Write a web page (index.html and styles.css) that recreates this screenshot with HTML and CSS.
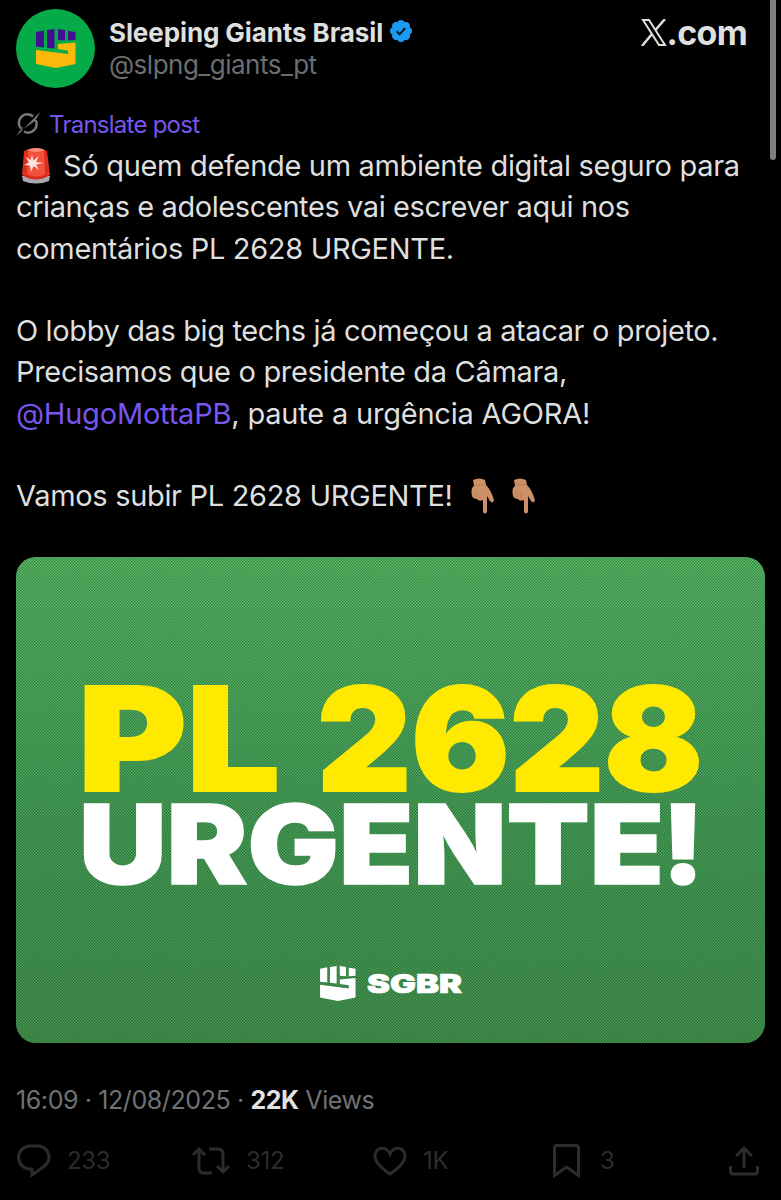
FILE: index.html
```
<!DOCTYPE html>
<html lang="pt-BR">
<head>
    <meta charset="UTF-8">
    <meta name="viewport" content="width=device-width, initial-scale=1.0">
    <title>Sleeping Giants Brasil</title>
    <link rel="stylesheet" href="styles.css">
</head>
<body>
    <div class="scrollbar"></div>
    <svg class="defs" width="0" height="0">
        <symbol id="fist-fingers" viewBox="0 0 40 39">
            <path d="M0 3L8 1.500V18.500L0 17.500ZM11 1L18.500 0V19.500L11 18.700ZM22 0L29 1V11.500L22 11ZM32 2L39.500 3V11L32 11.300Z"/>
        </symbol>
        <symbol id="fist-palm" viewBox="0 0 40 39">
            <path d="M22 15L39.500 13.500V35L20 39L0 35V21L32 25V21.500L22 20Z"/>
        </symbol>
    </svg>

    <div class="post">
        <div class="header">
            <div class="avatar">
                <svg width="40" height="39"><use href="#fist-fingers" fill="#40108f"/><use href="#fist-palm" fill="#fdb80c"/></svg>
            </div>
            <div class="author">
                <div class="name">
                    <span class="name-text">Sleeping Giants Brasil</span>
                    <svg class="badge" viewBox="0 0 22 22"><path fill="#1d9bf0" d="M20.396 11c-.018-.646-.215-1.275-.57-1.816-.354-.54-.852-.972-1.438-1.246.223-.607.27-1.264.14-1.897-.131-.634-.437-1.218-.882-1.687-.47-.445-1.053-.75-1.687-.882-.633-.13-1.290-.083-1.897.14-.273-.587-.704-1.086-1.245-1.440S11.647 1.620 11 1.604c-.646.017-1.273.213-1.813.568s-.969.854-1.240 1.440c-.608-.223-1.267-.272-1.902-.14-.635.130-1.220.436-1.690.882-.445.470-.749 1.055-.878 1.688-.130.633-.080 1.290.144 1.896-.587.274-1.087.705-1.443 1.245-.356.540-.555 1.170-.574 1.817.020.647.218 1.276.574 1.817.356.540.856.972 1.443 1.245-.224.606-.274 1.263-.144 1.896.130.634.433 1.218.877 1.688.470.443 1.054.747 1.687.878.633.132 1.290.084 1.897-.136.274.586.705 1.084 1.246 1.439.540.354 1.170.551 1.816.569.647-.016 1.276-.213 1.817-.567s.972-.854 1.245-1.440c.604.239 1.266.296 1.903.164.636-.132 1.220-.447 1.680-.907.460-.460.776-1.044.908-1.681s.075-1.299-.165-1.903c.586-.274 1.084-.705 1.439-1.246.354-.540.551-1.170.569-1.816z"/><path d="M7.300 11.200L9.900 13.700L14.600 8.500" fill="none" stroke="#071c2c" stroke-width="1.700"/></svg>
                </div>
                <div class="handle">@slpng_giants_pt</div>
            </div>
            <div class="brand">
                <svg width="26" height="27" viewBox="0 0 26 27"><g fill="none" stroke="#dcdddd"><path d="M2 1H8L24 26H18Z" stroke-width="2"/><path d="M24 0L14 11.500M11 15L1 27" stroke-width="2.500"/></g></svg>
                <span class="brand-text">.com</span>
            </div>
        </div>

        <div class="translate">
            <svg width="24" height="24" viewBox="0 0 24 24"><path d="M17 4.500A8.500 8.500 0 0 0 5 16.500M19.500 8A8.500 8.500 0 0 1 8 19.500" fill="none" stroke="#76797c" stroke-width="2.500"/><path d="M24 0L8 16.500L17 10.500Q21 7 24 0ZM0 24L7 14.500L6 19Z" fill="#76797c"/></svg>
            <span class="translate-text">Translate post</span>
        </div>

        <div class="content">
            <p>
                <span class="line l1"><svg class="siren" width="28" height="37" viewBox="0 0 28 37"><path d="M0 29L28 29L27 34Q14 39 1 34Z" fill="#a9a9ad"/><path d="M2 4Q14-2 25 4L28 28Q14 37 0 28Z" fill="#dc2e20"/><path d="M6 4Q14 0 22 4L23 27Q14 32 5 27Z" fill="#f4513a"/><path d="M5 3Q14-1 23 3Q14 7 5 3Z" fill="#ff8d78"/><path d="M10 8L11.500 13.500L17 9L14 15L22 16L14 17.500L17 23L11.500 19L9 25L8 18.500L2 18L7 15.500L3.500 10L8.500 13Z" fill="#ffe3dd"/></svg><span>Só quem defende um ambiente digital seguro para</span></span>
                <span class="line l2">crianças e adolescentes vai escrever aqui nos</span>
                <span class="line l3">comentários PL 2628 URGENTE.</span>
            </p>
            <p>
                <span class="line l4">O lobby das big techs já começou a atacar o projeto.</span>
                <span class="line l5">Precisamos que o presidente da Câmara,</span>
                <span class="line l6"><a href="#">@HugoMottaPB</a>, paute a urgência AGORA!</span>
            </p>
            <p>
                <span class="line l7"><span>Vamos subir PL 2628 URGENTE!</span><svg class="hand" width="23" height="36"><use href="#hand"/></svg><svg class="hand" width="23" height="36"><use href="#hand"/></svg></span>
            </p>
            <svg class="defs" width="0" height="0">
                <symbol id="hand" viewBox="0 0 23 36"><path d="M2 2Q8-1 14 2L15 7Q20 12 23 22Q22 26 19 23L16 18V34Q14 37 12 34V22Q8 24 6 21Q2 21 1 18Q0 14 1 10L3 8Z" fill="#cd9168"/><path d="M5 14V20M9 15V22M4 7Q9 8 14 6" fill="none" stroke="#b57a54" stroke-width=".8"/></symbol>
            </svg>
        </div>

        <div class="media">
            <svg width="749" height="486" viewBox="16 557 749 486">
                <defs>
                    <pattern id="halftone" width="17" height="17" patternUnits="userSpaceOnUse" patternTransform="scale(.1676)">
                        <path d="M0 0H9V9H0ZM8.500 8.500H17V17H8.500Z" fill="#02301a"/>
                    </pattern>
                </defs>
                <rect x="16" y="557" width="749" height="486" fill="url(#halftone)" opacity=".65"/>
                <text class="big" x="78" y="791" textLength="202" lengthAdjust="spacingAndGlyphs">PL</text>
                <text class="big" x="317" y="791" textLength="386" lengthAdjust="spacingAndGlyphs">2628</text>
                <text class="urgent" x="79" y="884" textLength="585" lengthAdjust="spacingAndGlyphs">URGENTE</text>
                <text class="urgent" x="662" y="884" textLength="42" lengthAdjust="spacingAndGlyphs">!</text>
                <g fill="#fff"><use href="#fist-fingers" x="320" y="966" width="36" height="35"/><use href="#fist-palm" x="320" y="966" width="36" height="35"/></g>
                <text class="sgbr" x="367" y="993" textLength="95" lengthAdjust="spacingAndGlyphs">SGBR</text>
            </svg>
        </div>

        <div class="meta">16:09 · 12/08/2025 · <b>22K</b> Views</div>

        <div class="actions">
            <div class="action reply">
                <svg width="34" height="34" viewBox="0 0 34 34"><path d="M13 2H21A11 11 0 0 1 32 13C32 20 28 22 15 31V25H13A11.500 11.500 0 0 1 13 2Z"/></svg>
                <span>233</span>
            </div>
            <div class="action repost">
                <svg width="38" height="30" viewBox="0 0 38 30"><path d="M1 9L7 3L13 9M7 3V22Q7 27 12 27H20M17 3H26Q31 3 31 8V26M25 20L31 26L37 20"/></svg>
                <span>312</span>
            </div>
            <div class="action like">
                <svg width="34" height="30" viewBox="0 0 34 30"><path d="M17 28C8 22 2 16 2 10C2 1 13-1 17 8C21-1 32 1 32 10C32 16 26 22 17 28Z"/></svg>
                <span>1K</span>
            </div>
            <div class="action save">
                <svg width="27" height="34" viewBox="0 0 27 34"><path d="M1.500 31.500V4Q1.500 1.500 4 1.500H23Q25.500 1.500 25.500 4V31.500L13.500 23Z"/></svg>
                <span>3</span>
            </div>
            <div class="action share">
                <svg width="30" height="30" viewBox="0 0 30 30"><path d="M15 22V3M7 10L15 2L23 10M1.500 20V25Q1.500 28 4.500 28H25.500Q28.500 28 28.500 25V20"/></svg>
            </div>
        </div>
    </div>
</body>
</html>
```
FILE: styles.css
```
body {
    margin: 0;
    background-color: #000;
    color: #dedfdf;
    font-family: Inter, "Liberation Sans", sans-serif;
    height: 1200px;
    position: relative;
    overflow: hidden;
}
svg {
    display: block;
    flex: none;
}
.defs {
    position: absolute;
}
.scrollbar {
    position: absolute;
    top: -10px;
    right: 5px;
    width: 6px;
    height: 170px;
    border-radius: 3px;
    background-color: #7d7d7d;
}
.post {
    padding: 9px 16px 0;
}
.header {
    display: flex;
    height: 79px;
}
.avatar {
    width: 79px;
    height: 79px;
    border-radius: 50%;
    background-color: #05ab48;
    display: flex;
    align-items: center;
    justify-content: center;
    flex: none;
}
.author {
    margin-left: 14px;
    padding-top: 6px;
    white-space: nowrap;
}
.name {
    display: flex;
    align-items: center;
    height: 34px;
    font-size: 26px;
    font-weight: 700;
    letter-spacing: -.1px;
}
.badge {
    width: 26px;
    height: 26px;
    margin-left: 5px;
    margin-top: -2px;
}
.handle {
    font-size: 26px;
    line-height: 32px;
    letter-spacing: -.5px;
    color: #6b6e71;
}
.brand {
    display: flex;
    margin-left: auto;
    margin-right: 18px;
    padding-top: 10px;
}
.brand-text {
    font-size: 34px;
    font-weight: 700;
    line-height: 28px;
    letter-spacing: -.7px;
}
.translate {
    display: flex;
    align-items: center;
    height: 32px;
    margin-top: 20px;
    gap: 9px;
    font-size: 24px;
    letter-spacing: -.75px;
    color: #7856ee;
}
.content {
    margin-top: 5px;
    font-size: 29px;
    line-height: 41.3px;
}
.content p {
    margin: 0 0 41.3px;
}
.content p:last-of-type {
    margin-bottom: 40.3px;
}
.line {
    display: flex;
    height: 41.3px;
    white-space: pre;
    letter-spacing: -.32px;
}
.l2 {
    letter-spacing: -.41px;
}
.l4 {
    letter-spacing: -.37px;
}
.l6 {
    letter-spacing: -.2px;
}
.line a {
    color: #7856ee;
    text-decoration: none;
}
.siren {
    margin: 2px 13px 0 6px;
}
.hand {
    margin: 3px 0 0 18px;
}
.media {
    height: 486px;
    border-radius: 20px;
    overflow: hidden;
    background-image: linear-gradient(#70dc77, #59bc65 55%, #57ae5c);
}
.media text {
    font-weight: 900;
}
.big {
    font-size: 144px;
    fill: #ffe900;
    stroke: #ffe900;
    stroke-width: 2px;
}
.urgent {
    font-size: 110px;
    fill: #fff;
    stroke: #fff;
    stroke-width: 1.5px;
}
.sgbr {
    font-size: 26px;
    fill: #fff;
    stroke: #fff;
    stroke-width: .7px;
}
.meta {
    margin-top: 40px;
    font-size: 25px;
    line-height: 34px;
    letter-spacing: -.4px;
    color: #6f7275;
    white-space: nowrap;
}
.meta b {
    color: #e3e3e3;
}
.actions {
    display: grid;
    grid-template-columns: 175px 181px 180px 155px 1fr;
    margin-top: 27px;
    margin-left: 1px;
    height: 34px;
    font-size: 24px;
    letter-spacing: -.3px;
    color: #2b2c2e;
}
.action {
    display: flex;
    align-items: center;
    gap: 16px;
}
.action svg {
    fill: none;
    stroke: #2b2c2e;
    stroke-width: 3;
}
.save {
    gap: 20px;
}
.share {
    justify-content: flex-end;
    padding-right: 6px;
}
```
